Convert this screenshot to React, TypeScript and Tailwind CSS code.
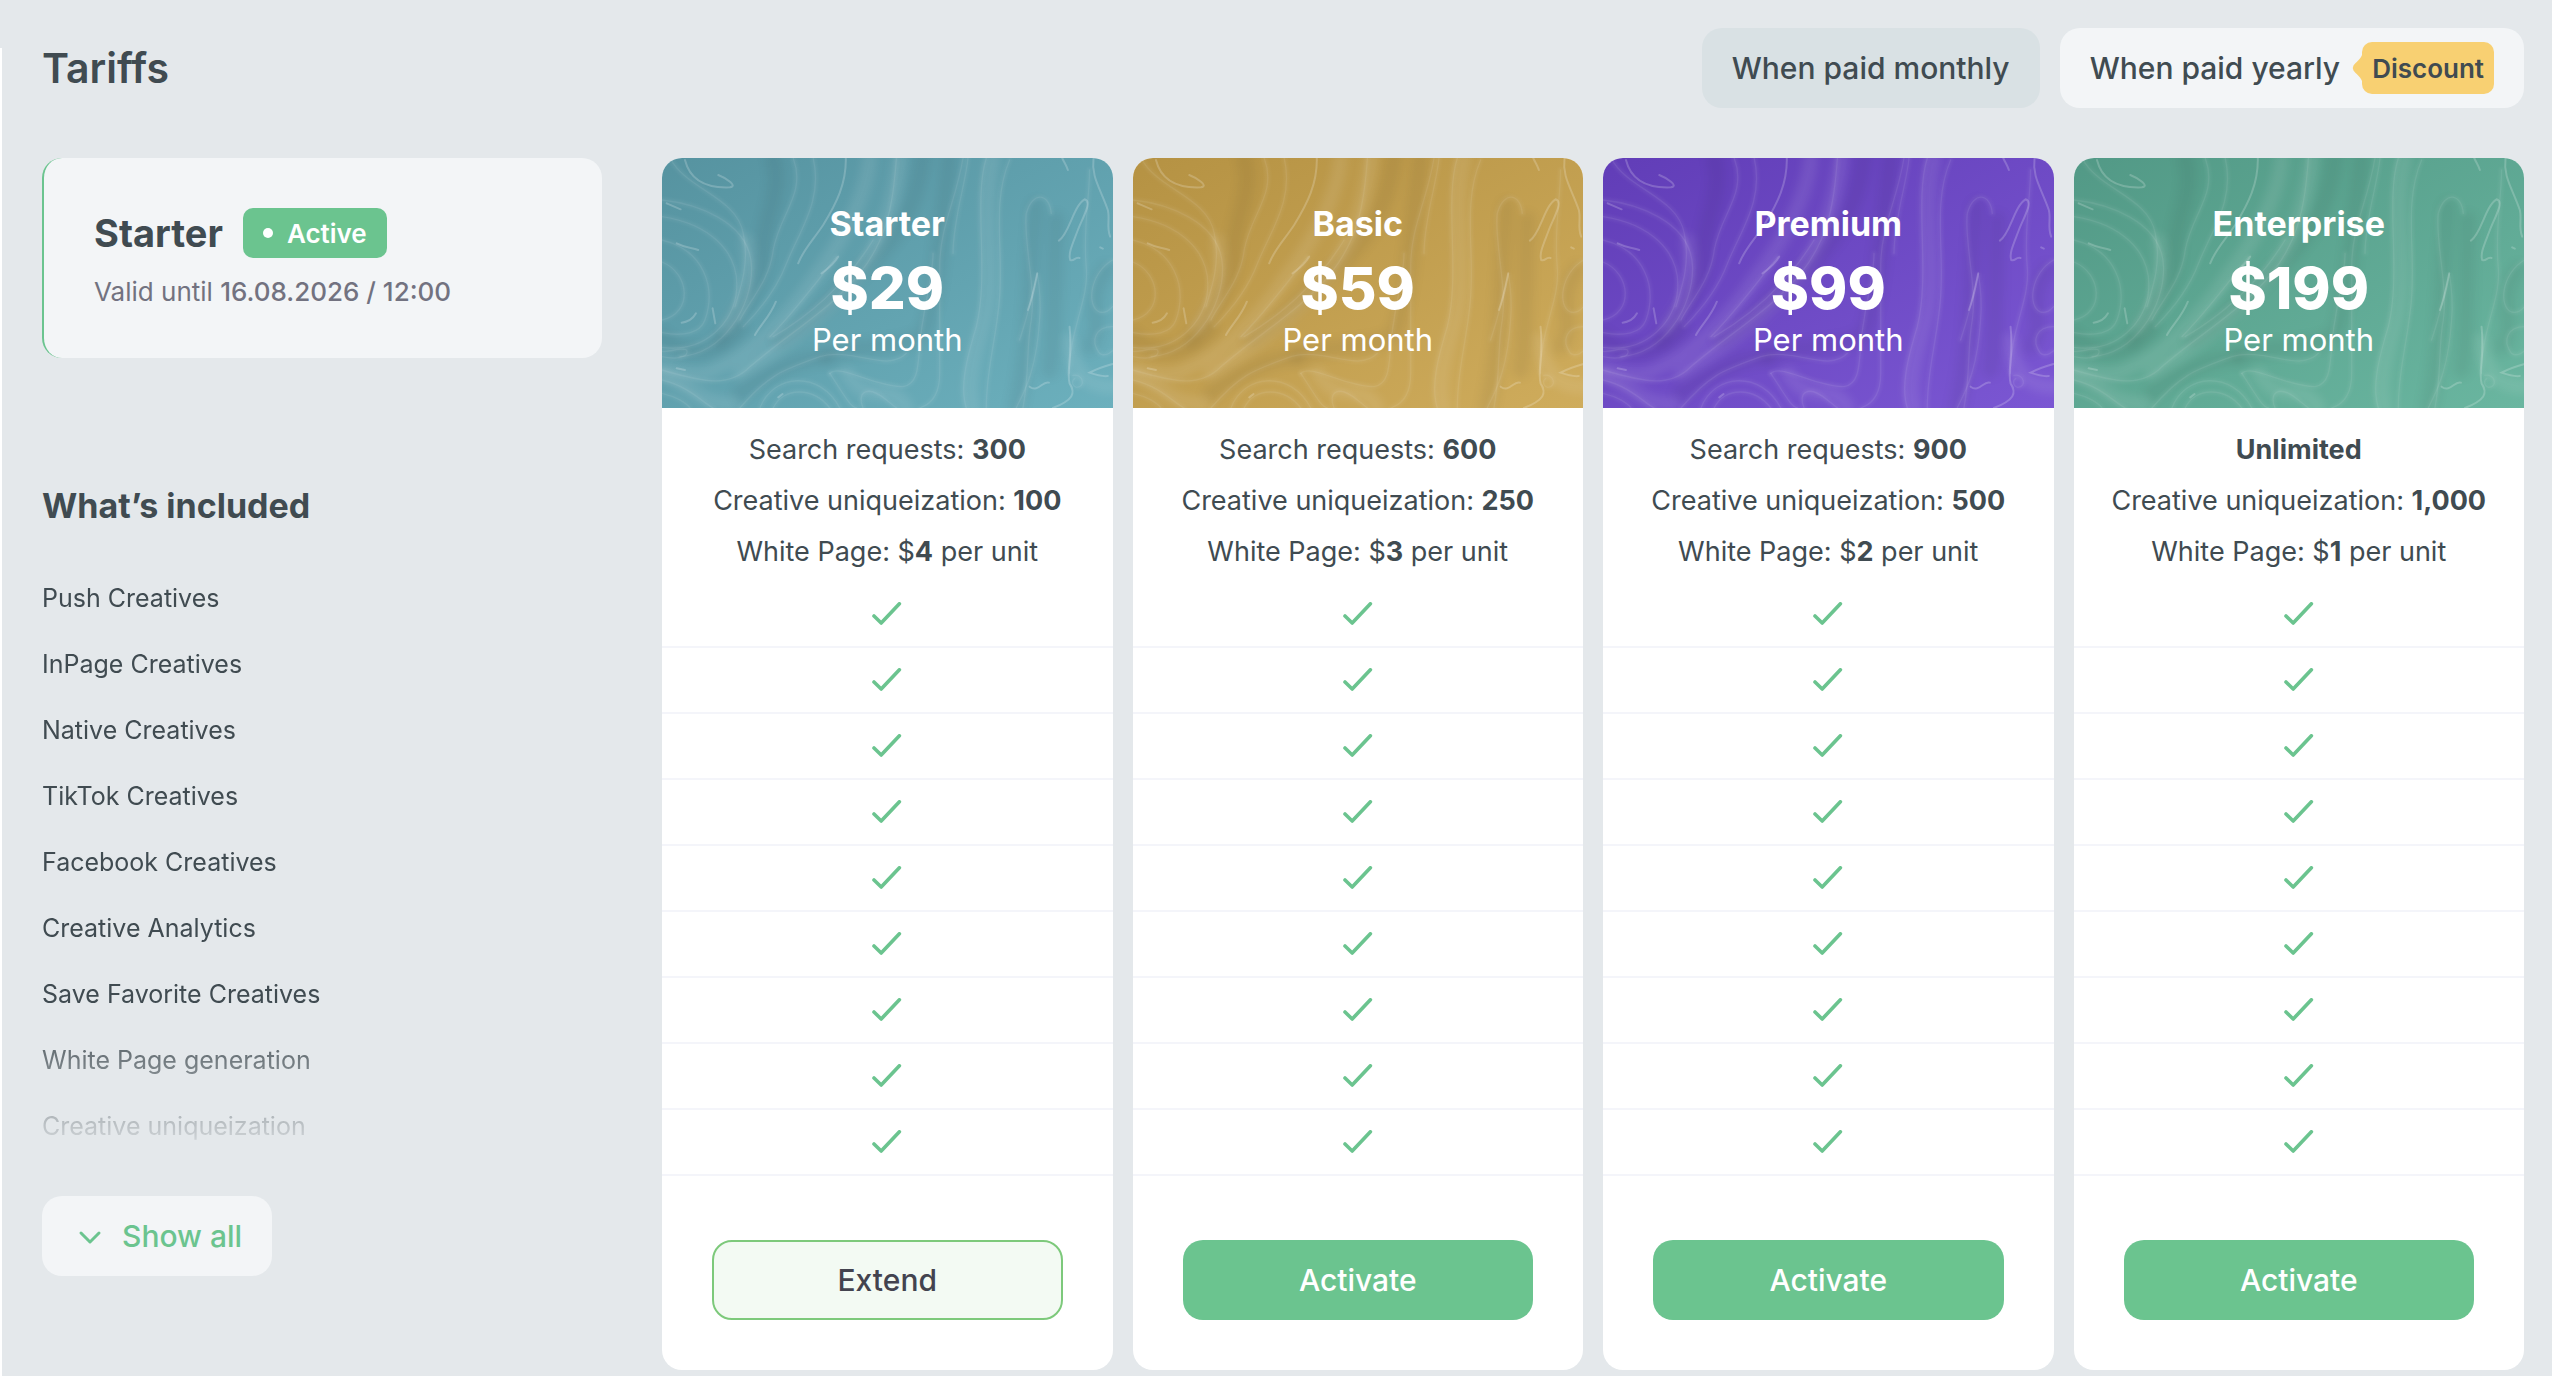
import { useState } from "react";

interface Plan {
  name: string;
  price: string;
  requests: string | null;
  unique: string;
  whitePage: string;
  current?: boolean;
  gradient: string;
}

const PLANS: Plan[] = [
  {
    name: "Starter",
    price: "$29",
    requests: "300",
    unique: "100",
    whitePage: "4",
    current: true,
    gradient: "bg-linear-to-br from-[#5693a0] to-[#6cb0bd]",
  },
  {
    name: "Basic",
    price: "$59",
    requests: "600",
    unique: "250",
    whitePage: "3",
    gradient: "bg-linear-to-br from-[#b59243] to-[#cfac5c]",
  },
  {
    name: "Premium",
    price: "$99",
    requests: "900",
    unique: "500",
    whitePage: "2",
    gradient: "bg-linear-to-br from-[#613db7] to-[#7b57d3]",
  },
  {
    name: "Enterprise",
    price: "$199",
    requests: null,
    unique: "1,000",
    whitePage: "1",
    gradient: "bg-linear-to-br from-[#529986] to-[#6ab6a0]",
  },
];

const FEATURES = [
  "Push Creatives",
  "InPage Creatives",
  "Native Creatives",
  "TikTok Creatives",
  "Facebook Creatives",
  "Creative Analytics",
  "Save Favorite Creatives",
  "White Page generation",
  "Creative uniqueization",
];

// Wide soft bands of the marble
const DARK_BANDS = [
  "M400 54C430 160 370 230 370 330C370 430 300 520 240 600",
  "M850 54C830 200 780 290 680 380C600 450 520 540 420 600",
  "M930 54C900 260 900 420 860 560C830 640 700 600 560 650",
  "M1190 200C1170 400 1180 560 1130 804",
  "M1400 390C1330 480 1400 560 1350 620",
  "M66 590C140 660 240 640 300 570",
  "M300 760C380 700 460 660 560 650",
  "M1250 240C1240 420 1250 560 1230 690",
];

const LIGHT_BANDS = [
  "M690 54C680 180 590 330 520 420C440 540 340 640 200 700C150 710 110 690 66 690",
  "M780 54C760 220 720 320 640 420C540 540 400 640 300 700",
  "M1060 54C1020 220 1080 420 1030 560C1000 660 980 740 1000 804",
  "M320 300C340 400 320 480 260 560",
  "M66 700C140 740 200 800 280 790",
  "M620 700C680 800 760 720 800 804",
  "M1290 600C1300 700 1340 740 1419 740",
];

// Thin veins
const VEINS = [
  "M66 366C150 400 160 520 66 540",
  "M66 300C190 330 230 440 195 540C180 580 130 590 66 578",
  "M66 230C200 250 300 330 290 450C285 540 200 640 66 622",
  "M66 180C160 190 330 240 335 380C338 500 250 640 120 650",
  "M90 54C140 150 290 170 310 280C330 370 300 450 285 500",
  "M460 54C500 160 420 220 400 330C390 420 330 480 300 540",
  "M520 54C550 180 480 270 440 370C410 450 350 520 310 560",
  "M590 350C520 440 460 520 390 590",
  "M700 300C620 430 520 520 400 590",
  "M770 54C760 200 740 300 660 400C570 510 460 570 330 680C270 740 200 730 66 690",
  "M970 54C950 180 900 260 900 380C900 500 900 600 900 700C900 790 850 800 840 804",
  "M985 54C980 120 940 240 940 340",
  "M1040 54C1000 180 1050 400 1010 560C980 660 960 740 980 804",
  "M1110 60C1050 200 1100 360 1075 520C1060 640 1040 700 1040 804",
  "M1150 804C1170 700 1160 620 1175 540C1190 440 1150 300 1160 220C1180 150 1230 160 1235 220",
  "M1130 804C1150 760 1190 700 1200 540C1205 480 1200 440 1193 400C1180 460 1160 540 1140 600",
  "M1350 90C1350 180 1330 260 1340 380C1350 480 1290 560 1290 700",
  "M1419 360C1350 400 1340 500 1380 516C1400 520 1410 510 1419 500",
  "M1419 560C1370 560 1350 600 1380 640C1395 650 1410 640 1419 632",
  "M570 700C600 670 700 740 790 740C850 730 830 640 850 540C860 470 880 400 880 340",
  "M570 700C610 760 630 800 650 804",
  "M670 804C650 760 680 730 740 780L770 804",
  "M400 804C430 740 520 740 570 804",
  "M360 804C400 700 540 690 600 804",
  "M300 804C390 700 430 690 540 650C640 620 740 700 800 640",
  "M66 720C150 740 190 790 220 804",
  "M66 760C110 770 140 790 150 804",
  "M66 650C110 660 150 650 140 630C120 620 80 640 66 634",
  "M1300 706C1330 700 1340 740 1312 742C1296 738 1296 720 1306 716",
];

// Bright short strokes where the paint pools
const HIGHLIGHTS = [
  "M135 60C150 120 200 145 270 142C295 138 260 115 235 105",
  "M618 54C620 130 590 190 550 255C520 300 490 330 475 370",
  "M80 190L122 208",
  "M110 310C140 325 155 322 175 330",
  "M125 548C150 545 160 535 168 520",
  "M218 505L226 550",
  "M595 350C580 375 565 385 545 400",
  "M408 485C390 530 365 550 345 585",
  "M1268 54C1275 70 1280 75 1285 90",
  "M1362 54C1355 110 1380 140 1405 210C1412 240 1400 260 1412 290",
  "M1258 302C1290 280 1300 200 1335 178C1360 185 1330 230 1315 270C1300 310 1285 340 1292 360C1305 365 1305 350 1320 354",
  "M1193 400C1185 440 1180 470 1165 510",
  "M1170 740C1195 760 1210 720 1228 728",
  "M1419 672C1390 680 1365 690 1350 698C1370 705 1390 710 1405 708",
  "M1290 560C1300 650 1280 690 1290 730C1310 760 1300 780 1240 804",
  "M415 772L428 762",
  "M110 685L135 690",
  "M1382 322L1390 326",
];

function Marble() {
  return (
    <svg
      className="absolute inset-0 size-full"
      viewBox="66 54 1353 750"
      preserveAspectRatio="none"
      fill="none"
      strokeLinecap="round"
      aria-hidden="true"
    >
      <g stroke="#000" strokeOpacity="0.05" strokeWidth="50" className="blur-[14px]">
        {DARK_BANDS.map((d) => (
          <path key={d} d={d} />
        ))}
      </g>
      <g stroke="#fff" strokeOpacity="0.09" strokeWidth="44" className="blur-[14px]">
        {LIGHT_BANDS.map((d) => (
          <path key={d} d={d} />
        ))}
      </g>
      <g stroke="#fff" strokeOpacity="0.05" strokeWidth="16" className="blur-[5px]">
        {VEINS.map((d) => (
          <path key={d} d={d} />
        ))}
      </g>
      <g stroke="#fff" strokeOpacity="0.07" strokeWidth="4" className="blur-[2px]">
        {VEINS.map((d) => (
          <path key={d} d={d} />
        ))}
      </g>
      <g stroke="#fff" strokeOpacity="0.2" strokeWidth="6" className="blur-[2px]">
        {HIGHLIGHTS.map((d) => (
          <path key={d} d={d} />
        ))}
      </g>
    </svg>
  );
}

function CheckIcon() {
  return (
    <svg width="30" height="24" viewBox="0 0 30 24" fill="none" role="img" aria-label="Included">
      <path
        d="M2 14L9.2 21L27.4 1.8"
        stroke="#6bc48f"
        strokeWidth="3.6"
        strokeLinecap="round"
        strokeLinejoin="round"
      />
    </svg>
  );
}

function PlanCard({ plan }: { plan: Plan }) {
  return (
    <article className="flex-1 bg-white rounded-[20px] overflow-hidden text-center">
      <header className={`relative h-[250px] pt-[46px] text-white ${plan.gradient}`}>
        <Marble />
        <div className="relative">
          <h3 className="text-[34px] leading-10 font-bold mb-1">{plan.name}</h3>
          <p className="text-[58px] leading-20 font-extrabold">{plan.price}</p>
          <p className="text-[31px] leading-6">Per month</p>
        </div>
      </header>

      <div className="pt-4 pb-[5px] text-[27px] leading-[51px]">
        {plan.requests ? (
          <p>
            Search requests: <b>{plan.requests}</b>
          </p>
        ) : (
          <p>
            <b>Unlimited</b>
          </p>
        )}
        <p>
          Creative uniqueization: <b>{plan.unique}</b>
        </p>
        <p>
          White Page: $<b>{plan.whitePage}</b> per unit
        </p>
      </div>

      <ul>
        {FEATURES.map((feature) => (
          <li
            key={feature}
            className="h-[66px] flex items-center justify-center border-b-2 border-[#f4f5fa]"
          >
            <CheckIcon />
          </li>
        ))}
      </ul>

      <div className="px-[50px] pt-16 pb-[50px]">
        {plan.current ? (
          <button className="w-full h-20 rounded-[20px] border-2 border-[#7dc97b] bg-[#f3faf3] text-[30px] font-medium text-[#43434f]">
            Extend
          </button>
        ) : (
          <button className="w-full h-20 rounded-[20px] bg-[#6bc48f] text-[30px] font-medium text-white">
            Activate
          </button>
        )}
      </div>
    </article>
  );
}

export default function App() {
  const [period, setPeriod] = useState<"monthly" | "yearly">("monthly");

  const tabColor = (value: string) =>
    period === value ? "bg-[#d9e1e4]" : "bg-[#f3f5f7]";

  return (
    <div className="min-h-screen flex bg-[#e4e8eb] font-['Inter',sans-serif] text-[#404b51]">
      {/* Edge of the side menu */}
      <div className="w-[2px] shrink-0 mt-12 bg-white" />

      <main className="flex-1 min-w-0 pl-10 pr-7 pt-7">
        <div className="flex items-center justify-between mb-[50px]">
          <h1 className="text-[41px] leading-12 font-semibold">Tariffs</h1>
          <div className="flex gap-5 text-[30px] font-medium">
            <button
              onClick={() => setPeriod("monthly")}
              className={`h-20 px-[30px] rounded-[20px] ${tabColor("monthly")}`}
            >
              When paid monthly
            </button>
            <button
              onClick={() => setPeriod("yearly")}
              className={`h-20 px-[30px] rounded-[20px] flex items-center ${tabColor("yearly")}`}
            >
              When paid yearly
              <span className="ml-3 flex items-center">
                <svg width="10" height="40" viewBox="0 0 10 40" fill="#f8d072" aria-hidden="true">
                  <path d="M10 7C8 12 4 14 1.5 17.5Q0 20 1.5 22.5C4 26 8 28 10 33Z" />
                </svg>
                <span className="h-13 px-[10px] flex items-center rounded-[10px] bg-[#f8d072] text-[26px] font-semibold">
                  Discount
                </span>
              </span>
            </button>
          </div>
        </div>

        <div className="flex items-start gap-[60px]">
          <aside className="w-[560px] shrink-0">
            <section className="pl-[50px] py-[50px] rounded-[20px] border-l-2 border-[#6bc48f] bg-[#f3f5f7]">
              <div className="flex items-center gap-5">
                <h2 className="text-[38px] leading-12 font-bold">Starter</h2>
                <span className="h-[50px] px-5 flex items-center gap-[14px] rounded-[10px] bg-[#6bc48f] text-[26px] font-semibold text-white">
                  <span className="size-[10px] rounded-full bg-white" />
                  Active
                </span>
              </div>
              <p className="mt-[18px] text-[26px] leading-8 text-[#727280]">
                Valid until <span className="font-medium">16.08.2026 / 12:00</span>
              </p>
            </section>

            <h2 className="mt-32 mb-10 text-[34px] leading-10 font-bold">What’s included</h2>
            <ul className="text-[25px] mask-[linear-gradient(to_bottom,black_76%,transparent_100%)]">
              {FEATURES.map((feature) => (
                <li key={feature} className="h-[66px] flex items-center">
                  {feature}
                </li>
              ))}
            </ul>

            <button className="mt-9 h-20 pl-9 pr-[30px] flex items-center gap-5 rounded-[20px] bg-[#f3f5f7] text-[30px] font-medium text-[#6bc48f]">
              <svg width="24" height="24" viewBox="0 0 24 24" fill="none" aria-hidden="true">
                <path
                  d="M3 9L12 18L21 9"
                  stroke="currentColor"
                  strokeWidth="3"
                  strokeLinecap="round"
                  strokeLinejoin="round"
                />
              </svg>
              Show all
            </button>
          </aside>

          <div className="flex-1 min-w-0 flex gap-5">
            {PLANS.map((plan) => (
              <PlanCard key={plan.name} plan={plan} />
            ))}
          </div>
        </div>
      </main>
    </div>
  );
}
